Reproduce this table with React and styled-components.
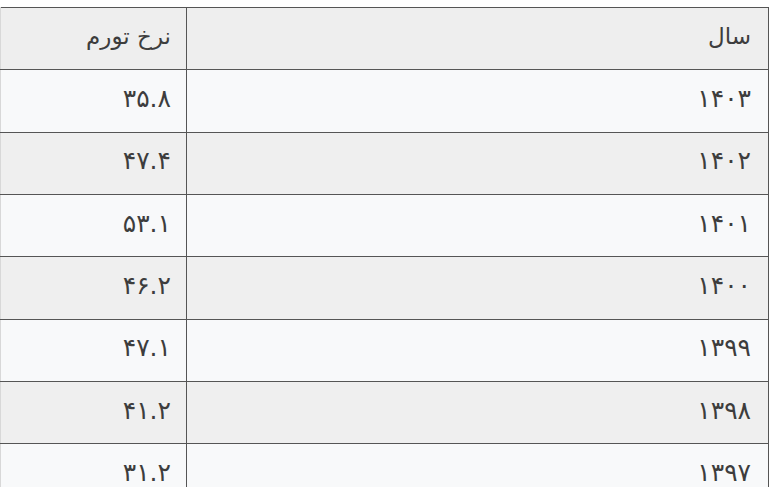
import React from "react";
import styled, { createGlobalStyle } from "styled-components";

const Global = createGlobalStyle`
  html, body { margin: 0; padding: 0; background: #ffffff; }
  body { font-family: "DejaVu Sans", sans-serif; }
`;

const Page = styled.div`
  padding-top: 7px;
  width: 768px;
`;

const Table = styled.table`
  direction: rtl;
  width: 768px;
  border-collapse: collapse;
  table-layout: fixed;
  color: #3d3d3d;
  font-family: "DejaVu Sans", sans-serif;
  font-size: 23px;
  border-top: 1px solid #555555;
  border-right: 1px solid #555555;
  border-left: 1px solid #d8d8d8;
`;

const Col = styled.col`
  width: ${(p) => p.$w};
`;

const Row = styled.tr`
  height: 62.33px;
  background: ${(p) => (p.$head ? "#eeeeee" : p.$alt ? "#efefef" : "#f8f9fa")};
`;

const Cell = styled.td`
  text-align: right;
  vertical-align: middle;
  padding: 0 17px 4px 10px;
  line-height: 1.2;
  font-size: 25px;
  border-bottom: 1px solid #555555;
  border-left: 1px solid #555555;
  white-space: nowrap;
  &:last-child { border-left: none; padding-right: 15px; }
`;

const HeadCell = styled(Cell).attrs({ as: "th" })`
  font-weight: normal;
  font-size: 23px;
`;

const rows = [
  ["۱۴۰۳", "۳۵.۸"],
  ["۱۴۰۲", "۴۷.۴"],
  ["۱۴۰۱", "۵۳.۱"],
  ["۱۴۰۰", "۴۶.۲"],
  ["۱۳۹۹", "۴۷.۱"],
  ["۱۳۹۸", "۴۱.۲"],
  ["۱۳۹۷", "۳۱.۲"],
];

export default function App() {
  return (
    <Page>
      <Global />
      <Table>
        <colgroup>
          <Col $w="582px" />
          <Col $w="186px" />
        </colgroup>
        <thead>
          <Row $head>
            <HeadCell>سال</HeadCell>
            <HeadCell>نرخ تورم</HeadCell>
          </Row>
        </thead>
        <tbody>
          {rows.map(([y, v], i) => (
            <Row key={y} $alt={i % 2 === 1}>
              <Cell>{y}</Cell>
              <Cell>{v}</Cell>
            </Row>
          ))}
        </tbody>
      </Table>
    </Page>
  );
}
